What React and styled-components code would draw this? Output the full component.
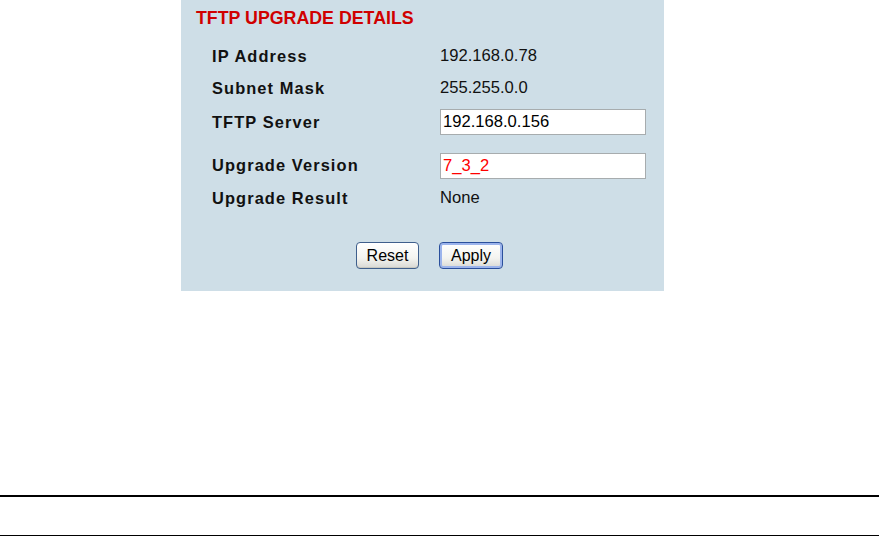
import styled, { createGlobalStyle } from "styled-components"

const GlobalStyle = createGlobalStyle`
    body{
        margin: 0;
        background: #ffffff;
        font-family: "Liberation Sans", Arial, sans-serif;
    }
`

const fields = [
    { label: 'IP Address', value: '192.168.0.78', h: 32, top: 4 },
    { label: 'Subnet Mask', value: '255.255.0.0', h: 32 },
    { label: 'TFTP Server', value: '192.168.0.156', input: true, h: 36 },
    { label: 'Upgrade Version', value: '7_3_2', input: true, red: true, h: 37, top: 7 },
    { label: 'Upgrade Result', value: 'None', h: 28 },
]

export default function App() {
    return (
        <>
            <GlobalStyle />
            <Panel>
                <Title>TFTP UPGRADE DETAILS</Title>
                {fields.map((f) => (
                    <Row key={f.label} $h={f.h} $top={f.top}>
                        <Label>{f.label}</Label>
                        {f.input
                            ? <Field type="text" defaultValue={f.value} $red={f.red} />
                            : <Value>{f.value}</Value>}
                    </Row>
                ))}
                <Buttons>
                    <Button>Reset</Button>
                    <Button $primary>Apply</Button>
                </Buttons>
            </Panel>
            <Footer />
        </>
    )
}

const Panel = styled.div`
    margin-left: 181px;
    width: 483px;
    height: 291px;
    box-sizing: border-box;
    background: #cedee7;
    padding-left: 15px;
`

const Title = styled.h2`
    margin: 0;
    height: 36px;
    line-height: 36px;
    font-size: 17.8px;
    font-weight: bold;
    color: #d00000;
    white-space: nowrap;
`

const Row = styled.div`
    display: grid;
    grid-template-columns: 228px 206px;
    align-items: center;
    height: ${p => p.$h}px;
    margin-top: ${p => p.$top || 0}px;
    padding-left: 16px;
`

const Label = styled.span`
    font-size: 16.4px;
    font-weight: bold;
    letter-spacing: 1.1px;
    color: #111;
    white-space: nowrap;
`

const Value = styled.span`
    font-size: 16.6px;
    color: #111;
`

const Field = styled.input`
    box-sizing: border-box;
    width: 206px;
    height: 26px;
    margin: 0;
    padding: 0 2px;
    border: 1px solid #a7acae;
    background: #fff;
    font-family: "Liberation Sans", Arial, sans-serif;
    font-size: 16.6px;
    color: ${p => p.$red ? '#ff0000' : '#000'};
    outline: none;
`

const Buttons = styled.div`
    display: flex;
    gap: 20px;
    margin-top: 30px;
    padding-left: 160px;
`

const Button = styled.button`
    box-sizing: border-box;
    width: ${p => p.$primary ? 64 : 63}px;
    height: 27px;
    padding: 0;
    border-radius: 4px;
    border: 1px solid ${p => p.$primary ? '#2a4f9c' : '#3f5f8c'};
    background: linear-gradient(#ffffff 0%, #f4f4f0 60%, #d8d8d4 100%);
    box-shadow: ${p => p.$primary ? 'inset 0 0 0 2px #9cb4ec' : 'inset 0 -1px 0 #c8c8c0'};
    font-family: "Liberation Sans", Arial, sans-serif;
    font-size: 16px;
    color: #000;
`

const Footer = styled.div`
    margin-top: 204px;
    height: 38px;
    border-top: 2px solid #000;
    border-bottom: 1px solid #000;
`
